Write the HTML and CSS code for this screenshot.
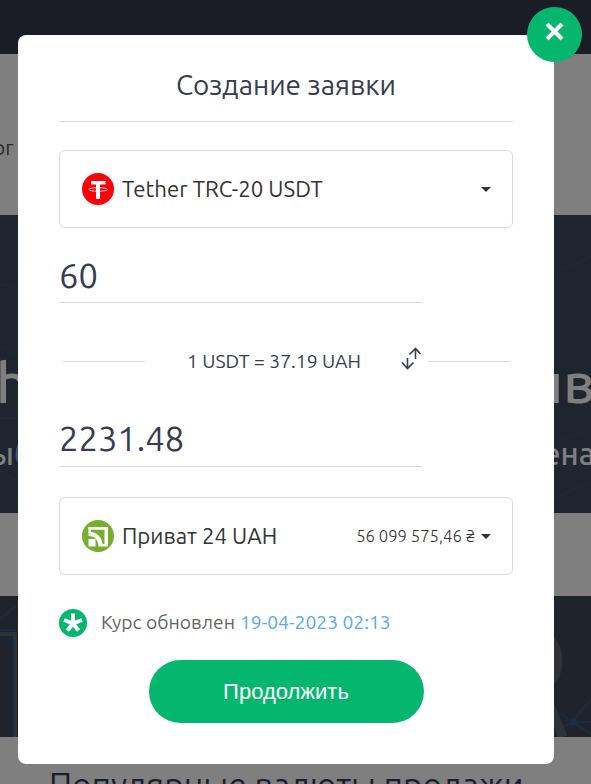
FILE: index.html
```
<!DOCTYPE html>
<html lang="ru">
  <head>
    <meta charset="UTF-8" />
    <meta name="viewport" content="width=device-width, initial-scale=1.0" />
    <title>Создание заявки</title>
    <link rel="stylesheet" href="styles.css">
  </head>
  <body>
    <!-- Page -->
    <div class="page">
      <header class="header"></header>
      <nav class="nav"><span>ог</span></nav>
      <section class="hero">
        <svg class="hero-net" viewBox="0 0 591 298" aria-hidden="true">
          <path d="M0 69l70 12M0 131l80 45-80 43M0 203h80M591 42l-60 26M591 175l-55-28M591 230l-60 40M591 237l-60 3M540 290l51-23M0 255l60 40M591 213l-60 25" />
        </svg>
        <div class="hero-title"><span>h</span><span>ив</span></div>
        <div class="hero-text"><span>ы<b>б</b></span><span>ена</span></div>
      </section>
      <section class="banner">
        <svg viewBox="0 0 591 141" aria-hidden="true">
          <path class="net" d="M0 23L30 0M0 34h30M591 103l-19 23-20-15M591 138l-19-12-25 15M572 126h19" />
          <path class="frame" d="M0 38h15v103" />
          <path class="glow" d="M0 44h12v97" />
          <path class="letter" d="M540 38c24 5 24 47 0 55M545 97l18 44" />
          <circle class="dot" cx="573" cy="126" r="4" />
        </svg>
      </section>
      <h2>Популярные валюты продажи</h2>
    </div>

    <!-- Modal -->
    <div class="overlay">
      <div class="modal">
        <button class="close-btn" type="button" aria-label="Закрыть">
          <svg width="20" height="20" viewBox="0 0 20 20"><path d="M2 2l15 15M17 2L2 17" /></svg>
        </button>
        <h1>Создание заявки</h1>
        <form class="order-form">
          <div class="select">
            <svg class="coin" viewBox="0 0 32 32">
              <circle cx="16" cy="16" r="16" fill="#ff0008" />
              <path d="M9 8h14.500v3.500H18V26h-4V11.500H9z" fill="#fff" />
              <ellipse cx="16.200" cy="16.500" rx="9.300" ry="1.800" fill="none" stroke="#fff" stroke-width=".8" />
            </svg>
            <span class="select-name">Tether TRC-20 USDT</span>
            <i class="caret"></i>
          </div>

          <div class="field"><span>60</span></div>

          <div class="rate">
            <i class="rate-line"></i>
            <span class="rate-text">1 USDT = 37.19 UAH</span>
            <svg class="swap" width="20" height="24" viewBox="0 0 20 24"><path d="M14.500 12V2M8.500 7.500l6-6 5 5.500M6.500 11v10.500M1 15.500l5.500 6 6-6" /></svg>
            <i class="rate-line"></i>
          </div>

          <div class="field second"><span>2231.48</span></div>

          <div class="select">
            <svg class="coin" viewBox="0 0 32 32">
              <circle cx="16" cy="16" r="16" fill="#75af2b" />
              <path d="M6.500 7H26v19.500h-5.500V24h2V9.700h-16z" fill="#fff" />
              <path d="M6.500 7h2.500v6H6.500z" fill="#fff" />
              <path d="M6.500 11.700C15 11.700 20.500 17 21 26.500h-4.500C16 19.500 13 16.200 6.500 16z" fill="#fff" />
              <path d="M6.500 19h7v7.500h-7z" fill="#fff" />
            </svg>
            <span class="select-name">Приват 24 UAH</span>
            <span class="reserve">56 099 575,46 ₴</span>
            <i class="caret"></i>
          </div>

          <div class="updated">
            <svg width="28" height="28" viewBox="0 0 28 28">
              <circle cx="14" cy="14" r="14" fill="#05b76e" />
              <path d="M14 14.500V4.500M14 14.500l-9-3.500M14 14.500l9-3.500M14 14.500l-5.500 7M14 14.500l5.500 7" />
            </svg>
            <span class="updated-label">Курс обновлен</span>
            <span class="updated-date">19-04-2023 02:13</span>
          </div>

          <button class="submit-btn" type="button">Продолжить</button>
        </form>
      </div>
    </div>
  </body>
</html>
```
FILE: styles.css
```
* {
  box-sizing: border-box;
}

body {
  margin: 0;
  height: 784px;
  overflow: hidden;
  font-family: Ubuntu, "Noto Sans", sans-serif;
  color: #373c50;
  background: #fff;
}

/* Page */
.page {
  height: 784px;
  overflow: hidden;
}

.header {
  height: 54px;
  background: #363a4c;
}

.nav {
  height: 161px;
  padding-top: 80px;
  font-size: 21px;
  line-height: 27px;
  color: #555;
}

.nav span {
  margin-left: -7px;
}

.hero {
  position: relative;
  height: 298px;
  padding-top: 128px;
  background: #3c4a5c;
  color: #fff;
}

.hero-net {
  position: absolute;
  top: 0;
  left: 0;
  fill: none;
  stroke: #3b5468;
  stroke-width: 1.5;
}

.hero-title,
.hero-text {
  position: relative;
  display: flex;
  justify-content: space-between;
  white-space: nowrap;
}

.hero-title {
  height: 76px;
  margin: 0 -4px 0 -4px;
  font-size: 56px;
  font-weight: 500;
  line-height: 79px;
}

.hero-text {
  margin: 0 -4px 0 -10px;
  font-size: 31px;
  font-weight: 500;
  line-height: 70px;
}

.hero-text b {
  font-weight: 500;
  color: #65b5f3;
}

.banner {
  height: 141px;
  margin-top: 83px;
  background: #3e4659;
}

.banner svg {
  display: block;
  fill: none;
}

.net {
  stroke: #365c7c;
  stroke-width: 1.5;
}

.frame {
  stroke: #5e626d;
  stroke-width: 4;
}

.glow {
  stroke: #2c5071;
  stroke-width: 3;
}

.letter {
  stroke: #60646e;
  stroke-width: 9;
}

.dot {
  fill: #365c7c;
}

h2 {
  margin: 25px 0 0 49px;
  font-size: 33.5px;
  font-weight: 400;
  line-height: 46px;
  white-space: nowrap;
}

/* Modal */
.overlay {
  position: fixed;
  inset: 0;
  padding: 35px 37px 20px 18px;
  background: rgba(0, 0, 0, 0.5);
}

.modal {
  position: relative;
  height: 729px;
  padding: 0 41px;
  border-radius: 8px;
  background: #fff;
}

.close-btn {
  position: absolute;
  top: -28px;
  right: -28px;
  width: 55px;
  height: 55px;
  padding: 0 0 3px;
  border: none;
  border-radius: 50%;
  background: #05b76e;
  cursor: pointer;
}

.close-btn path {
  stroke: #fff;
  stroke-width: 4;
}

h1 {
  height: 87px;
  margin: 0 0 28px;
  padding-top: 31px;
  border-bottom: 1px solid #dadada;
  font-size: 27.8px;
  font-weight: 400;
  line-height: 37px;
  text-align: center;
}

.order-form {
  display: flex;
  flex-direction: column;
}

.select {
  display: flex;
  align-items: center;
  height: 78px;
  padding: 0 21px 0 22px;
  border: 1px solid #dadada;
  border-radius: 6px;
  color: #333;
  white-space: nowrap;
}

.coin {
  width: 32px;
  height: 32px;
  margin-right: 8px;
}

.select-name {
  flex: 1;
  padding-bottom: 2px;
  font-size: 22.2px;
}

.reserve {
  margin-right: 6px;
  padding-bottom: 2px;
  font-size: 16.7px;
  font-weight: 300;
}

.caret {
  border: 5px solid transparent;
  border-top-color: #333;
  border-bottom: 0;
}

.field {
  width: 363px;
  height: 75px;
  padding-top: 25px;
  border-bottom: 1px solid #dadada;
  font-size: 34.5px;
  line-height: 46px;
}

.field.second {
  height: 57px;
  margin: 37px 0 30px;
  padding-top: 6px;
}

.rate {
  display: flex;
  align-items: center;
  height: 24px;
  margin: 46px 3px 0 4px;
}

.rate-line {
  width: 82px;
  border-top: 1px solid #dadada;
}

.rate-text {
  margin-left: 42px;
  font-size: 19.3px;
  white-space: nowrap;
}

.swap {
  margin: -4px 7px 0 auto;
  fill: none;
  stroke: #373c50;
  stroke-width: 1.6;
}

.updated {
  display: flex;
  align-items: center;
  height: 28px;
  margin: 34px 0 23px;
  font-size: 19.3px;
  white-space: nowrap;
}

.updated span {
  padding-bottom: 2px;
}

.updated path {
  stroke: #fff;
  stroke-width: 4;
}

.updated-label {
  margin: 0 5px 0 14px;
  color: #666;
}

.updated-date {
  color: #56aaec;
}

.submit-btn {
  align-self: center;
  width: 275px;
  height: 63px;
  border: none;
  border-radius: 32px;
  background: #05b76e;
  color: #fff;
  font-family: "Liberation Sans", Arial, sans-serif;
  font-size: 22px;
  cursor: pointer;
}
```
